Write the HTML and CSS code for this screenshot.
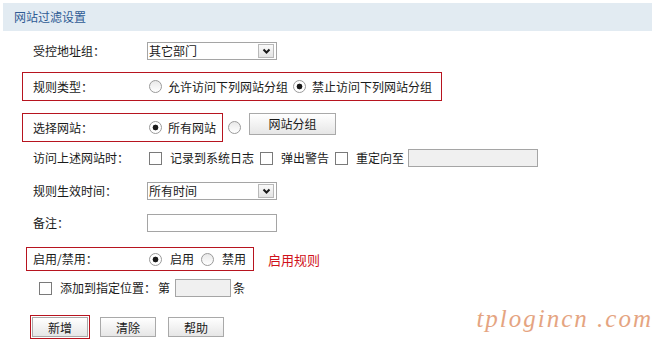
FILE: index.html
```html
<!DOCTYPE html>
<html lang="zh-CN">
<head>
    <meta charset="UTF-8">
    <title>网站过滤设置</title>
    <link rel="stylesheet" href="styles.css">
</head>
<body>
    <div class="panel">
        <div class="panel-title">网站过滤设置</div>

        <div class="form">
            <!-- 受控地址组 -->
            <div class="row mt7">
                <div class="field">
                    <span class="label">受控地址组：</span>
                    <div class="select">
                        <span class="select-text">其它部门</span>
                        <span class="select-arrow"><svg width="13" height="11" viewBox="0 0 13 11"><path d="M3.5 3.5 L6.5 6.5 L9.5 3.5" fill="none" stroke="#1a1a1a" stroke-width="2"/></svg></span>
                    </div>
                </div>
            </div>

            <!-- 规则类型 -->
            <div class="row mt8">
                <div class="field mark mark-type">
                    <span class="label">规则类型：</span>
                    <input type="radio" name="ruleType" class="radio">
                    <span class="opt">允许访问下列网站分组</span>
                    <input type="radio" name="ruleType" class="radio" checked>
                    <span class="opt">禁止访问下列网站分组</span>
                </div>
            </div>

            <!-- 选择网站 -->
            <div class="row mt12">
                <div class="field mark mark-site">
                    <span class="label">选择网站：</span>
                    <input type="radio" name="site" class="radio" checked>
                    <span class="opt">所有网站</span>
                </div>
                <input type="radio" name="site" class="radio radio-out">
                <button class="btn btn-group">网站分组</button>
            </div>

            <!-- 访问上述网站时 -->
            <div class="row mt3">
                <div class="field">
                    <span class="label">访问上述网站时：</span>
                    <input type="checkbox" class="check">
                    <span class="opt opt-check">记录到系统日志</span>
                    <input type="checkbox" class="check">
                    <span class="opt opt-check">弹出警告</span>
                    <input type="checkbox" class="check">
                    <span class="opt opt-check">重定向至</span>
                    <input type="text" class="text text-off text-redirect" disabled>
                </div>
            </div>

            <!-- 规则生效时间 -->
            <div class="row mt7">
                <div class="field">
                    <span class="label">规则生效时间：</span>
                    <div class="select">
                        <span class="select-text">所有时间</span>
                        <span class="select-arrow"><svg width="13" height="11" viewBox="0 0 13 11"><path d="M3.5 3.5 L6.5 6.5 L9.5 3.5" fill="none" stroke="#1a1a1a" stroke-width="2"/></svg></span>
                    </div>
                </div>
            </div>

            <!-- 备注 -->
            <div class="row mt6">
                <div class="field">
                    <span class="label">备注：</span>
                    <input type="text" class="text text-note">
                </div>
            </div>

            <!-- 启用/禁用 -->
            <div class="row mt11">
                <div class="field mark mark-enable">
                    <span class="label">启用/禁用：</span>
                    <input type="radio" name="enable" class="radio" checked>
                    <span class="opt opt-wide">启用</span>
                    <input type="radio" name="enable" class="radio">
                    <span class="opt opt-wide">禁用</span>
                </div>
                <span class="note">启用规则</span>
            </div>

            <!-- 添加到指定位置 -->
            <div class="row mt4">
                <div class="field field-pos">
                    <input type="checkbox" class="check">
                    <span class="opt opt-check">添加到指定位置：</span>
                    <span class="opt-plain">第</span>
                    <input type="text" class="text text-off text-pos" disabled>
                    <span class="opt-plain">条</span>
                </div>
            </div>

            <!-- 按钮 -->
            <div class="row mt13 actions">
                <button class="btn btn-action btn-focus">新增</button>
                <button class="btn btn-action">清除</button>
                <button class="btn btn-action">帮助</button>
            </div>
        </div>
    </div>

    <div class="watermark">tplogincn .com</div>
</body>
</html>
```

FILE: styles.css
```css
* {
    box-sizing: border-box;
    margin: 0;
    padding: 0;
}

body {
    font-family: "Noto Sans CJK SC", "Liberation Sans", sans-serif;
    font-size: 12px;
    color: #1a1a1a;
    background-color: #fff;
    width: 658px;
    height: 342px;
    overflow: hidden;
    position: relative;
}

.panel-title {
    margin: 3px 6px 0 3px;
    height: 28px;
    line-height: 28px;
    padding-left: 11px;
    background-color: #e2ebf2;
    color: #2f5b95;
    font-size: 12px;
}

.row {
    display: flex;
    align-items: center;
    padding-left: 22px;
}

.mt3 { margin-top: 3px; }
.mt4 { margin-top: 4px; }
.mt6 { margin-top: 6px; }
.mt7 { margin-top: 7px; }
.mt8 { margin-top: 8px; }
.mt11 { margin-top: 11px; }
.mt12 { margin-top: 12px; }
.mt13 { margin-top: 13px; }

.field {
    display: flex;
    align-items: center;
    height: 26px;
    padding-left: 11px;
    line-height: 16px;
}

.mark {
    border: 1px solid #b7141f;
    height: 29px;
    padding-left: 10px;
}

.mark-type {
    padding-right: 6px;
}

.mark-site {
    padding-right: 3px;
}

.mark-enable {
    height: 24px;
    margin-left: 4px;
    padding-left: 6px;
    padding-right: 2px;
}

.label {
    width: 114px;
    flex-shrink: 0;
}

/* 单选 / 复选 */
.radio {
    -webkit-appearance: none;
    appearance: none;
    width: 13px;
    height: 13px;
    border: 1px solid #9a9a9a;
    border-radius: 50%;
    background: linear-gradient(#e9e9e9, #fff);
    margin-left: 2px;
    flex-shrink: 0;
}

.radio:checked {
    background: radial-gradient(circle, #1a1a1a 0, #1a1a1a 2.6px, #fff 3.2px);
}

.radio + .opt {
    margin-left: 6px;
    margin-right: 3px;
}

.radio + .opt-wide {
    margin-left: 8px;
    margin-right: 5px;
}

.radio-out {
    margin-left: 5px;
}

.check {
    -webkit-appearance: none;
    appearance: none;
    width: 13px;
    height: 13px;
    border: 1px solid #7a7a7a;
    background-color: #fff;
    margin-left: 2px;
    flex-shrink: 0;
}

.opt-check {
    margin-left: 8px;
    margin-right: 4px;
}

.opt-plain {
    margin: 0 5px 0 2px;
}

/* 下拉框 */
.select {
    width: 130px;
    height: 18px;
    border: 1px solid #a5a5a5;
    display: flex;
    align-items: center;
    justify-content: space-between;
    padding-left: 1px;
    padding-right: 2px;
    background-color: #fff;
}

.select-text {
    line-height: 16px;
}

.select-arrow {
    width: 16px;
    height: 14px;
    border: 1px solid #b9b9b9;
    background: linear-gradient(#fafafa, #e4e4e4);
    display: flex;
    align-items: center;
    justify-content: center;
}

/* 文本框 */
.text {
    height: 18px;
    border: 1px solid #a5a5a5;
    background-color: #fff;
    font-family: inherit;
    font-size: 12px;
}

.text-off {
    background-color: #f0f0f0;
}

.text-note {
    width: 130px;
}

.text-redirect {
    width: 130px;
}

.field-pos {
    padding-left: 15px;
}

.field-pos .opt-check {
    margin-right: 0;
}

.text-pos {
    width: 56px;
}

/* 按钮 */
.btn {
    font-family: inherit;
    font-size: 12px;
    color: #1a1a1a;
    border: 1px solid #a9a9a9;
    background: linear-gradient(#ffffff, #e6e6e6);
    cursor: pointer;
}

.btn-group {
    width: 87px;
    height: 22px;
    margin-left: 8px;
    margin-top: -8px;
}

.actions {
    height: 26px;
    padding-left: 32px;
}

.btn-action {
    width: 56px;
    height: 20px;
    margin-right: 12px;
}

.btn-focus {
    outline: 1px solid #b7141f;
    outline-offset: 1px;
}

.note {
    margin-left: 14px;
    color: #d0121b;
    font-size: 13px;
}

.watermark {
    position: absolute;
    right: 5px;
    bottom: 9px;
    font-family: "Liberation Serif", serif;
    font-style: italic;
    font-size: 25px;
    letter-spacing: 2px;
    color: #e39b74;
    opacity: 0.9;
}
```
